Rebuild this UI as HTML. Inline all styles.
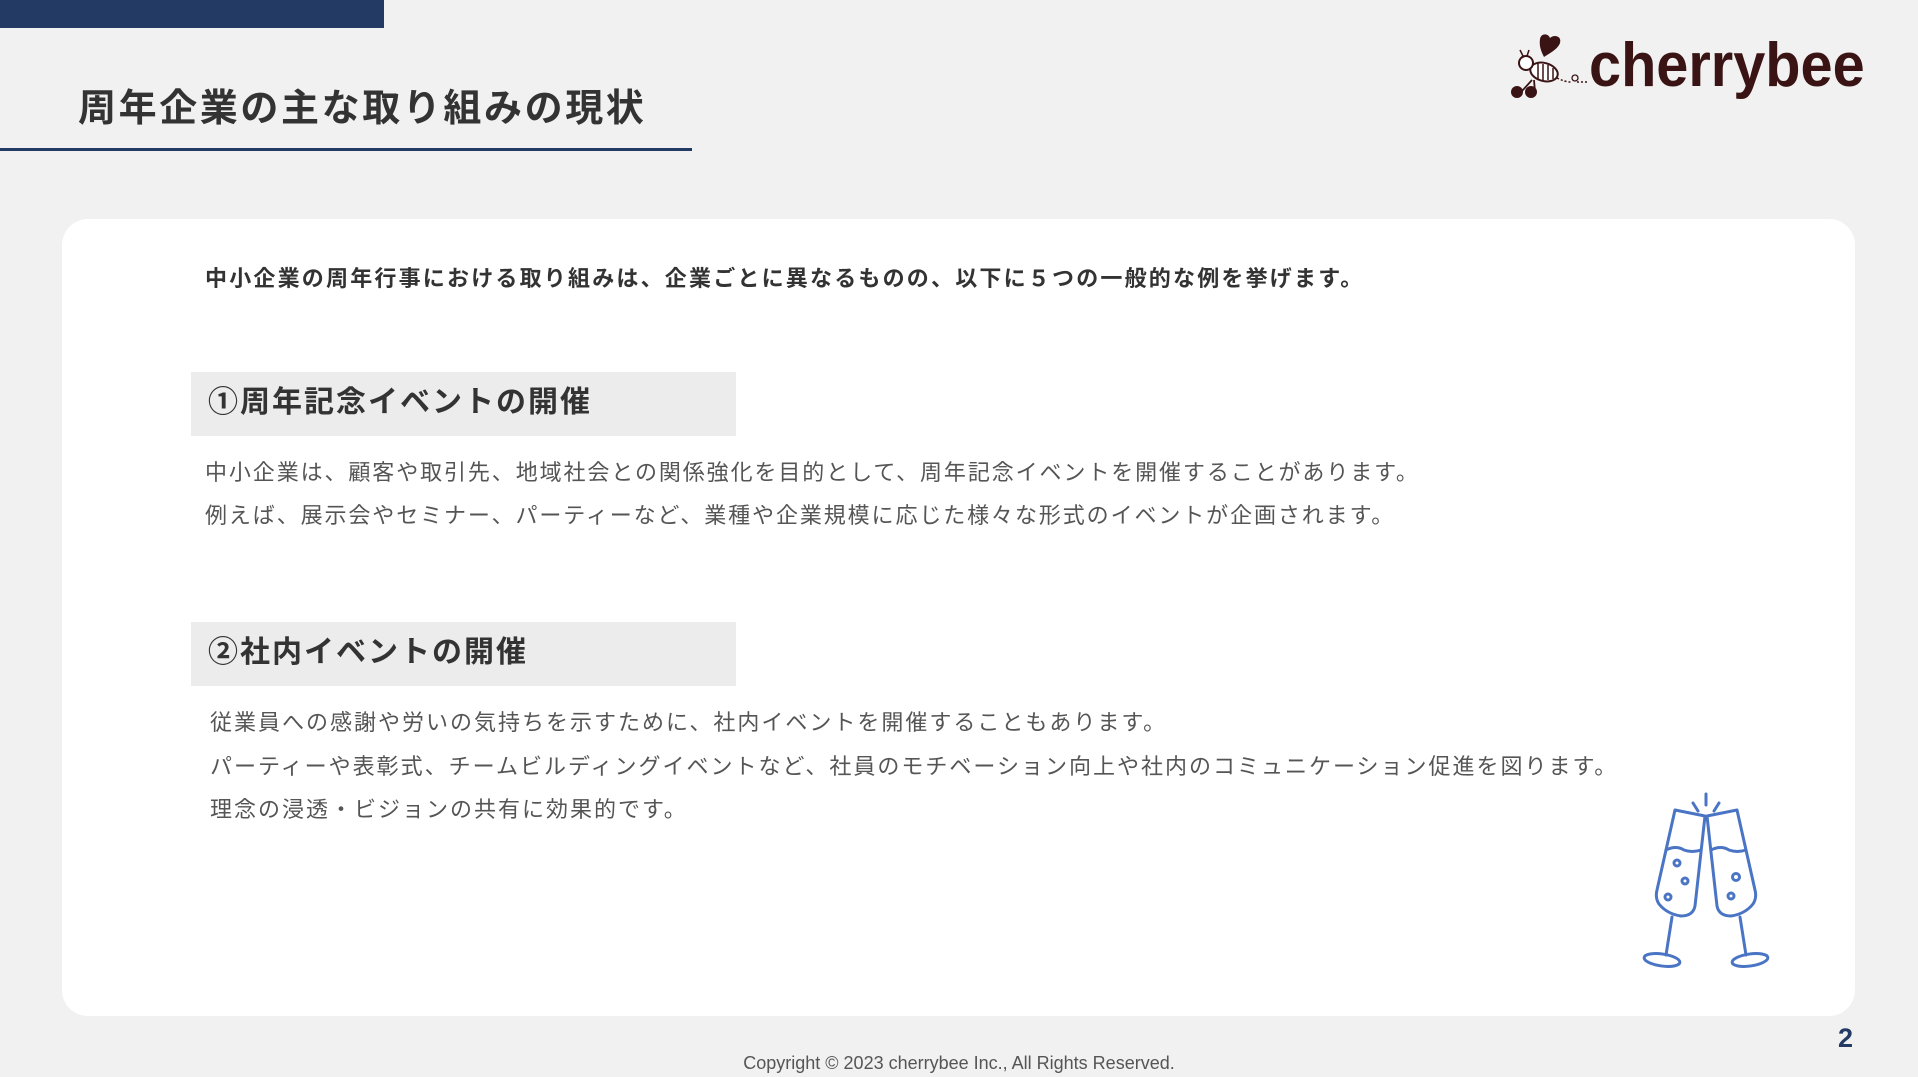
<!DOCTYPE html>
<html><head><meta charset="utf-8"><style>
*{margin:0;padding:0;box-sizing:border-box}
body{width:1918px;height:1077px;background:#f1f1f1;position:relative;overflow:hidden;font-family:"Liberation Sans","Noto Sans CJK JP",sans-serif;color:#333}
.abs{position:absolute;white-space:nowrap}
</style></head><body>
<div class="abs" style="left:0;top:0;width:384px;height:28px;background:#233a64"></div>
<div class="abs" style="left:78px;top:85px;font-size:38px;font-weight:700;color:#333;line-height:48px;letter-spacing:2.6px">周年企業の主な取り組みの現状</div>
<div class="abs" style="left:0;top:148px;width:692px;height:3px;background:#233a64"></div>

<svg class="abs" style="left:1505px;top:30px" width="90" height="75" viewBox="0 0 90 75">
<path d="M35 9c1-6 8-6 10-1c4-4 12-2 10 5c-2 6-10 10-16 14c-3-6-5-11-4-18z" fill="#3a1414"/>
<ellipse cx="39" cy="42" rx="14" ry="9" transform="rotate(15 39 42)" fill="#fff" stroke="#3a1414" stroke-width="2"/>
<path d="M33 33v16M38 34v16M43 35v15M48 38v11" stroke="#3a1414" stroke-width="1.5"/>
<circle cx="21" cy="33" r="7" fill="#fff" stroke="#3a1414" stroke-width="2"/>
<path d="M18 26l-3-6M22 26l2-6" stroke="#3a1414" stroke-width="1.5"/>
<path d="M27 50l-10 11M29 50l1 12" stroke="#3a1414" stroke-width="1.8"/>
<circle cx="12" cy="62" r="6" fill="#3a1414"/><circle cx="26" cy="62" r="6" fill="#3a1414"/>
<path d="M52 48q8 4 14 4" stroke="#3a1414" stroke-width="1.5" stroke-dasharray="2 2" fill="none"/>
<circle cx="70" cy="48" r="3" fill="none" stroke="#3a1414" stroke-width="1.3"/>
<path d="M72 52h12" stroke="#3a1414" stroke-width="1.5" stroke-dasharray="2 2"/>
</svg>
<div class="abs" style="left:1589px;top:35px;font-size:62px;font-weight:700;color:#3a1414;line-height:62px;font-family:'Liberation Sans',sans-serif;transform:scaleX(0.93);transform-origin:0 0">cherrybee</div>

<div class="abs" style="left:62px;top:219px;width:1793px;height:797px;background:#fff;border-radius:26px"></div>
<div class="abs" style="left:205px;top:265px;font-size:22px;font-weight:700;color:#333;line-height:28px;letter-spacing:2.2px">中小企業の周年行事における取り組みは、企業ごとに異なるものの、以下に５つの一般的な例を挙げます。</div>

<div class="abs" style="left:191px;top:372px;width:545px;height:64px;background:#ececec"></div>
<div class="abs" style="left:208px;top:383px;font-size:30px;font-weight:700;color:#333;line-height:40px;letter-spacing:2px">①周年記念イベントの開催</div>
<div class="abs" style="left:205px;top:451px;font-size:22px;color:#555;line-height:43px;letter-spacing:1.9px">中小企業は、顧客や取引先、地域社会との関係強化を目的として、周年記念イベントを開催することがあります。<br>例えば、展示会やセミナー、パーティーなど、業種や企業規模に応じた様々な形式のイベントが企画されます。</div>

<div class="abs" style="left:191px;top:622px;width:545px;height:64px;background:#ececec"></div>
<div class="abs" style="left:208px;top:633px;font-size:30px;font-weight:700;color:#333;line-height:40px;letter-spacing:2px">②社内イベントの開催</div>
<div class="abs" style="left:210px;top:701px;font-size:22px;color:#555;line-height:43.5px;letter-spacing:2px">従業員への感謝や労いの気持ちを示すために、社内イベントを開催することもあります。<br>パーティーや表彰式、チームビルディングイベントなど、社員のモチベーション向上や社内のコミュニケーション促進を図ります。<br>理念の浸透・ビジョンの共有に効果的です。</div>

<svg class="abs" style="left:1620px;top:780px" width="160" height="200" viewBox="0 0 160 200" fill="none" stroke="#4a74c4" stroke-width="3" stroke-linecap="round" stroke-linejoin="round">
<path d="M73 23l5 8M86 14v11M99 23l-5 8"/>
<path d="M55 30l30 6l-10 90q-2 10-14 10q-14-2-22-12q-4-6-2-14z"/>
<path d="M46 70q10-5 18 0q8 3 17 0"/>
<path d="M52 137l-6 38"/><ellipse cx="42" cy="180" rx="18" ry="6" transform="rotate(8 42 180)"/>
<circle cx="57" cy="83" r="3"/><circle cx="65" cy="101" r="3"/><circle cx="48" cy="117" r="3"/>
<path d="M117 30l-30 6l10 90q2 10 14 10q14-2 22-12q4-6 2-14z"/>
<path d="M91 70q10-5 18 0q8 3 17 0"/>
<path d="M120 137l6 38"/><ellipse cx="130" cy="180" rx="18" ry="6" transform="rotate(-8 130 180)"/>
<circle cx="116" cy="97" r="3.5"/><circle cx="111" cy="116" r="3"/>
</svg>

<div class="abs" style="left:1838px;top:1022px;font-size:27px;font-weight:700;color:#233a64;line-height:32px">2</div>
<div class="abs" style="left:0;width:1918px;text-align:center;top:1052px;font-size:18px;color:#555;line-height:22px">Copyright © 2023 cherrybee Inc., All Rights Reserved.</div>
</body></html>
